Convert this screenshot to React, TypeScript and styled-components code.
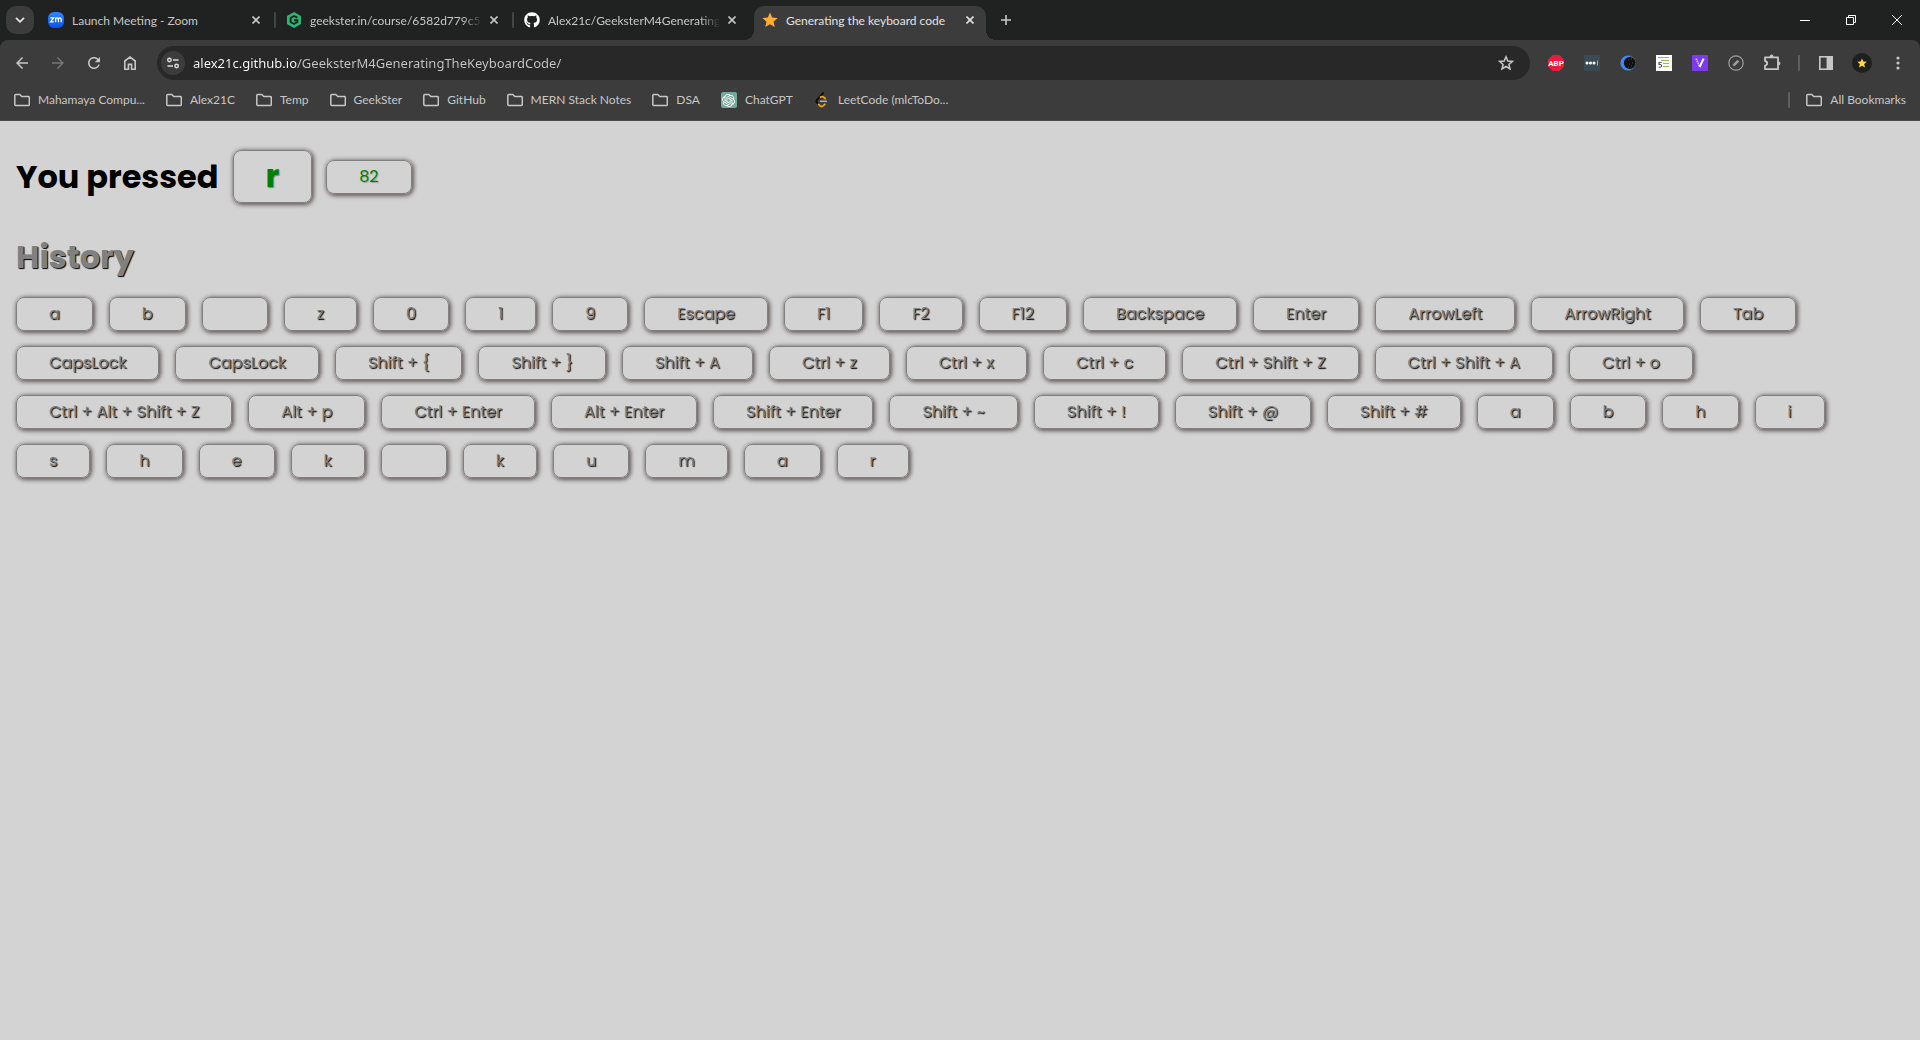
import React from 'react';
import styled, { createGlobalStyle, css } from 'styled-components';
import { FaGithub } from 'react-icons/fa';
import { SiOpenai } from 'react-icons/si';

const uiFont = "'Segoe UI', Lato, 'Open Sans', sans-serif";
const pageFont = "Poppins, Inter, 'Open Sans', sans-serif";

const color = {
  frame: '#202222',
  toolbar: '#3c3c3c',
  field: '#282828',
  icon: '#c7c7c7',
  text: '#c7c7c7',
  page: '#d3d3d3',
};

const GlobalStyle = createGlobalStyle`
  *, *::before, *::after { box-sizing: border-box; }
  body { margin: 0; background: ${color.page}; }
  button { font: inherit; color: inherit; border: 0; padding: 0; background: none; cursor: pointer; }
  ul { list-style: none; margin: 0; padding: 0; }
  svg { display: block; flex: none; }
`;

const Browser = styled.div`
  display: flex;
  flex-direction: column;
  min-height: 100vh;
`;

const Chrome = styled.header`
  background: ${color.frame};
  color: ${color.text};
  font-family: ${uiFont};
  font-size: 12px;
  line-height: 16px;
`;

const TabStrip = styled.div`
  display: flex;
  align-items: center;
  height: 40px;
  padding-left: 6px;
`;

const TabSearch = styled.button`
  display: grid;
  place-items: center;
  width: 28px;
  height: 28px;
  margin-right: 6px;
  border-radius: 10px;
  background: ${color.toolbar};
`;

const TabList = styled.div`
  display: flex;
  align-self: stretch;
  align-items: center;
  gap: 2px;
`;

const TabDivider = styled.span<{ $hidden?: boolean }>`
  width: 2px;
  height: 16px;
  border-radius: 1px;
  background: ${(p) => (p.$hidden ? 'transparent' : '#444545')};
`;

const TabBox = styled.div<{ $active?: boolean }>`
  display: flex;
  align-items: center;
  align-self: stretch;
  width: 232px;
  margin-top: 6px;
  padding: 0 8px 6px;
  border-radius: 10px 10px 0 0;
  ${(p) =>
    p.$active &&
    css`
      position: relative;
      background: ${color.toolbar};
      color: #e3e3e3;
      &::before,
      &::after {
        content: '';
        position: absolute;
        bottom: 0;
        width: 10px;
        height: 10px;
      }
      &::before {
        right: 100%;
        background: radial-gradient(circle at 0 0, transparent 10px, ${color.toolbar} 10px);
      }
      &::after {
        left: 100%;
        background: radial-gradient(circle at 100% 0, transparent 10px, ${color.toolbar} 10px);
      }
    `}
`;

const TabTitle = styled.span<{ $fade?: boolean }>`
  flex: 1;
  min-width: 0;
  margin: 0 4px 0 8px;
  padding-top: 2px;
  overflow: hidden;
  white-space: nowrap;
  ${(p) => p.$fade && css`mask-image: linear-gradient(to left, transparent, #000 20px);`}
`;

const CloseTab = styled.button`
  display: grid;
  place-items: center;
  width: 16px;
  height: 16px;
`;

const NewTab = styled.button`
  display: grid;
  place-items: center;
  width: 28px;
  height: 28px;
  margin-left: 2px;
`;

const WindowControls = styled.div`
  display: flex;
  align-self: stretch;
  margin-left: auto;
  color: #fff;
`;

const WindowButton = styled.button`
  display: grid;
  place-items: center;
  width: 46px;
`;

const Bars = styled.div`
  background: ${color.toolbar};
  border-radius: 8px 8px 0 0;
  border-bottom: 1px solid #4b4b4b;
`;

const Toolbar = styled.div`
  display: flex;
  align-items: center;
  padding: 6px 4px;
`;

const ToolButton = styled.button<{ $dim?: boolean }>`
  display: grid;
  place-items: center;
  width: 36px;
  height: 34px;
  color: ${(p) => (p.$dim ? '#757575' : color.icon)};
`;

const Omnibox = styled.form`
  display: flex;
  flex: 1;
  align-items: center;
  height: 34px;
  margin: 0 8px 0 9px;
  padding: 0 6px 0 4px;
  border-radius: 17px;
  background: ${color.field};
`;

const SiteInfo = styled.button`
  display: grid;
  place-items: center;
  width: 24px;
  height: 24px;
  border-radius: 50%;
  background: ${color.toolbar};
`;

const Address = styled.input`
  flex: 1;
  min-width: 0;
  height: 24px;
  margin-left: 8px;
  padding: 0;
  border: 0;
  outline: 0;
  font-family: 'Segoe UI', 'Noto Sans', sans-serif;
  font-size: 13px;
  color: transparent;
  background: linear-gradient(90deg, #fff 104px, ${color.text} 104px);
  background-clip: text;
`;

const Divider = styled.span`
  width: 2px;
  height: 16px;
  margin: 0 8px;
  border-radius: 1px;
  background: #5f5f5f;
`;

const Avatar = styled.span`
  display: grid;
  place-items: center;
  width: 20px;
  height: 20px;
  border-radius: 50%;
  background: #1f1f1f;
`;

const BookmarkBar = styled.nav`
  display: flex;
  align-items: center;
  gap: 21px;
  padding: 0 14px 6px;
`;

const Bookmark = styled.a`
  display: flex;
  align-items: center;
  gap: 8px;
  height: 28px;
  color: inherit;
  text-decoration: none;
  white-space: nowrap;
`;

const AllBookmarks = styled.div`
  display: flex;
  align-items: center;
  gap: 8px;
  margin-left: auto;
`;

const GptTile = styled.span`
  display: grid;
  place-items: center;
  width: 16px;
  height: 16px;
  border-radius: 2px;
  background: #74a99b;
  color: #fff;
`;

const Page = styled.main`
  flex: 1;
  padding: 29px 16px;
  background: ${color.page};
  font-family: ${pageFont};
  font-size: 16px;
`;

const Pressed = styled.h1`
  display: flex;
  align-items: center;
  gap: 14px;
  margin: 0;
  color: #000;
  font-size: 32px;
  font-weight: 700;
  line-height: 48px;
`;

const HistoryTitle = styled.h2`
  margin: 30px 0 16px;
  color: #808080;
  font-size: 32px;
  font-weight: 700;
  line-height: 48px;
  text-shadow: 1px 1px 1px #000;
`;

const keyCap = css`
  display: block;
  padding: 0 32px;
  border: 1px solid #808080;
  border-radius: 8px;
  box-shadow: 1px 1px 4px 1px #645858;
  font-family: ${pageFont};
  text-align: center;
  white-space: nowrap;
`;

const CurrentKey = styled.kbd`
  ${keyCap}
  padding-top: 2px;
  padding-bottom: 3px;
  color: green;
  line-height: 46px;
  text-shadow: 1px 1px 1px #808080;
`;

const CurrentCode = styled.kbd`
  ${keyCap}
  color: green;
  font-size: 16px;
  font-weight: 400;
  line-height: 32px;
  text-shadow: 1px 1px 1px #a0a0a0;
`;

const KeyList = styled.ul`
  display: flex;
  flex-wrap: wrap;
  gap: 15px 16px;
`;

const HistoryKey = styled.kbd`
  ${keyCap}
  height: 34px;
  color: #808080;
  font-size: 16px;
  line-height: 32px;
  text-shadow: 1px 1px 1px #000;
`;

const history = [
  'a', 'b', ' ', 'z', '0', '1', '9', 'Escape', 'F1', 'F2', 'F12', 'Backspace', 'Enter',
  'ArrowLeft', 'ArrowRight', 'Tab', 'CapsLock', 'CapsLock', 'Shift + {', 'Shift + }',
  'Shift + A', 'Ctrl + z', 'Ctrl + x', 'Ctrl + c', 'Ctrl + Shift + Z', 'Ctrl + Shift + A',
  'Ctrl + o', 'Ctrl + Alt + Shift + Z', 'Alt + p', 'Ctrl + Enter', 'Alt + Enter',
  'Shift + Enter', 'Shift + ~', 'Shift + !', 'Shift + @', 'Shift + #', 'a', 'b', 'h', 'i',
  's', 'h', 'e', 'k', ' ', 'k', 'u', 'm', 'a', 'r',
];

const starPoints = '8,0.6 10.2,5.6 15.6,6.1 11.5,9.7 12.8,15.1 8,12.2 3.2,15.1 4.5,9.7 0.4,6.1 5.8,5.6';

const Star = ({ size, fill }: { size: number; fill: string }) => (
  <svg width={size} height={size} viewBox="0 0 16 16">
    <polygon points={starPoints} fill={fill} />
  </svg>
);

const Cross = () => (
  <svg width="8" height="8" viewBox="0 0 8 8" stroke="currentColor" strokeWidth="1.6">
    <path d="M.5.5l7 7M7.5.5l-7 7" />
  </svg>
);

const Material = ({ d, size = 18 }: { d: string; size?: number }) => (
  <svg width={size} height={size} viewBox="0 0 24 24" fill="currentColor">
    <path d={d} />
  </svg>
);

const Folder = () => (
  <svg width="16" height="16" viewBox="0 0 16 16" fill="none" stroke="currentColor" strokeWidth="1.5" strokeLinejoin="round">
    <path d="M.8 3.5q0-1 1-1h4l2 2h6.5q1 0 1 1v7q0 1-1 1H1.8q-1 0-1-1z" />
  </svg>
);

const ZoomIcon = () => (
  <svg width="16" height="16" viewBox="0 0 16 16">
    <defs>
      <linearGradient id="zoomBlue" x1="0" y1="1" x2="0" y2="0">
        <stop offset="0" stopColor="#0a4ff0" />
        <stop offset="1" stopColor="#2f86ff" />
      </linearGradient>
    </defs>
    <rect width="16" height="16" rx="6" fill="url(#zoomBlue)" />
    <path d="M2.4 5.8h3.2L2.6 9.8h3.2M7.6 10.3V5.5M7.6 7.4q0-1.6 1.4-1.6t1.4 1.6v2.9M10.4 7.4q0-1.6 1.4-1.6t1.4 1.6v2.9" fill="none" stroke="#fff" strokeWidth="1.3" />
  </svg>
);

const GeeksterIcon = () => (
  <svg width="16" height="16" viewBox="0 0 16 16">
    <path d="M8 0l7 4v8l-7 4-7-4V4z" fill="#2bb673" />
    <path d="M11.4 5.6L8 4 4.6 6v4L8 12l3.4-2V8.2H8" fill="none" stroke="#202222" strokeWidth="1.9" />
  </svg>
);

const LeetCodeIcon = () => (
  <svg width="16" height="16" viewBox="0 0 16 16" fill="none" strokeWidth="1.8" strokeLinecap="round">
    <path d="M9.2 1L4 6.6" stroke="#0b0b0b" />
    <path d="M4 6.6L2.8 8q-1.1 1.3 0 2.5l1.4 1.4" stroke="#0b0b0b" />
    <path d="M4.6 12.4l1.2 1.3q1.8 1.6 3.6 0l1.4-1.4M6.6 5q2-1 3.4.4l1.2 1.2" stroke="#f5a11c" />
    <path d="M6.4 9.2h6" stroke="#b3b3b3" strokeWidth="1.5" />
  </svg>
);

const ChevronDown = () => (
  <svg width="10" height="6" viewBox="0 0 10 6" fill="none" stroke="#e3e3e3" strokeWidth="1.8">
    <path d="M1 .8l4 4 4-4" />
  </svg>
);

const HomeIcon = () => (
  <svg width="18" height="18" viewBox="0 0 18 18" fill="none" stroke="currentColor" strokeWidth="1.6">
    <path d="M3.8 15.2V7L9 3l5.2 4v8.2h-3.6v-4.8H7.4v4.8z" />
  </svg>
);

const TuneIcon = () => (
  <svg width="14" height="12" viewBox="0 0 14 12" fill="none" stroke="#dcdcdc" strokeWidth="1.5">
    <circle cx="3.4" cy="3" r="1.7" />
    <path d="M7 3h5.5M1.5 9H7" />
    <circle cx="10.6" cy="9" r="1.7" />
  </svg>
);

const AdblockIcon = () => (
  <svg width="16" height="16" viewBox="0 0 16 16">
    <path d="M4.7 0h6.6L16 4.7v6.6L11.3 16H4.7L0 11.3V4.7z" fill="#ee1c3c" />
    <text x="8" y="10.8" textAnchor="middle" fill="#fff" fontFamily="Roboto, sans-serif" fontSize="8" fontWeight="700">ABP</text>
  </svg>
);

const DotsIcon = () => (
  <svg width="16" height="16" viewBox="0 0 16 16">
    <rect width="16" height="16" fill="#3b4a54" />
    <g fill="#fff">
      <circle cx="3" cy="8" r="1.5" />
      <circle cx="6.5" cy="8" r="1.5" />
      <circle cx="10" cy="8" r="1.5" />
    </g>
    <path d="M13.5 5.5v5" stroke="#a5afb5" />
  </svg>
);

const MoonIcon = () => (
  <svg width="16" height="16" viewBox="0 0 16 16">
    <circle cx="8" cy="8" r="7.6" fill="#4288f5" />
    <circle cx="9.8" cy="8" r="6" fill="#111" />
    <path d="M10 .8a7.4 7.4 0 0 1 0 14.4" fill="none" stroke="#555" strokeWidth="1.2" strokeDasharray="1.4 1" />
    <path d="M8 5h1M11 4h1M12 8h1M9 9h1M11 11h1M8 12h1" stroke="#4a4a4a" />
  </svg>
);

const SheetIcon = () => (
  <svg width="16" height="16" viewBox="0 0 16 16">
    <rect width="16" height="16" fill="#fff" />
    <path d="M2 2.5h11M5 5.5h8M7 8.5h6M7 11.5h6" stroke="#8bc34a" strokeWidth="1.2" />
    <path d="M5.6 7.5H3v2q2.6-.4 2.6 1.3T2.6 12.2" fill="none" stroke="#555" strokeWidth="1.1" />
  </svg>
);

const VioletIcon = () => (
  <svg width="16" height="16" viewBox="0 0 16 16">
    <rect width="16" height="16" rx="1" fill="#7c3aed" />
    <path d="M4.2 3.6l3.4 8.2" stroke="#d8c6fb" strokeWidth="1.8" strokeDasharray="1.4 .8" />
    <path d="M7.6 12l4-8.4" stroke="#fff" strokeWidth="2" />
  </svg>
);

const PenCircleIcon = () => (
  <svg width="16" height="16" viewBox="0 0 16 16" fill="none" stroke="#9e9e9e">
    <circle cx="8" cy="8" r="7.2" strokeWidth="1.2" />
    <path d="M5.4 10.6l5-5" strokeWidth="2.6" />
  </svg>
);

const PuzzleIcon = () => (
  <svg width="18" height="18" viewBox="0 0 18 18" fill="none" stroke="currentColor" strokeWidth="1.8" strokeLinejoin="round">
    <path d="M2 3.4h13v11.8H2v-3.6q2.2-.4 2.2-2.3T2 7z" />
    <path d="M7 2.6a1.6 1.6 0 0 1 3.2 0zM15.4 7.8a1.6 1.6 0 0 1 0 3.2z" fill="currentColor" strokeWidth="1" />
  </svg>
);

const PanelIcon = () => (
  <svg width="16" height="16" viewBox="0 0 16 16">
    <rect x="1.8" y="1.8" width="12.4" height="12.4" fill="none" stroke="currentColor" strokeWidth="1.6" />
    <rect x="8.6" y="1.8" width="6" height="12.4" fill="currentColor" />
  </svg>
);

const MenuIcon = () => (
  <svg width="4" height="14" viewBox="0 0 4 14" fill="currentColor">
    <circle cx="2" cy="2" r="1.6" />
    <circle cx="2" cy="7" r="1.6" />
    <circle cx="2" cy="12" r="1.6" />
  </svg>
);

const tabs = [
  { title: 'Launch Meeting - Zoom', icon: <ZoomIcon /> },
  { title: 'geekster.in/course/6582d779c5', icon: <GeeksterIcon />, fade: true },
  { title: 'Alex21c/GeeksterM4Generating', icon: <FaGithub size={16} color="#fff" />, fade: true },
  { title: 'Generating the keyboard code', icon: <Star size={16} fill="#ffac33" />, active: true },
];

const bookmarks = [
  { name: 'Mahamaya Compu...' },
  { name: 'Alex21C' },
  { name: 'Temp' },
  { name: 'GeekSter' },
  { name: 'GitHub' },
  { name: 'MERN Stack Notes' },
  { name: 'DSA' },
  { name: 'ChatGPT', icon: <GptTile><SiOpenai size={13} /></GptTile> },
  { name: 'LeetCode (mlcToDo...', icon: <LeetCodeIcon /> },
];

const extensions = [
  { name: 'Adblock Plus', icon: <AdblockIcon /> },
  { name: 'Password tool', icon: <DotsIcon /> },
  { name: 'Dark mode', icon: <MoonIcon /> },
  { name: 'Sheet tool', icon: <SheetIcon /> },
  { name: 'Violet', icon: <VioletIcon /> },
  { name: 'Pen', icon: <PenCircleIcon /> },
  { name: 'Extensions', icon: <PuzzleIcon /> },
];

export default function App() {
  return (
    <Browser>
      <GlobalStyle />
      <Chrome>
        <TabStrip>
          <TabSearch aria-label="Search tabs"><ChevronDown /></TabSearch>
          <TabList role="tablist">
            {tabs.map((tab, i) => (
              <React.Fragment key={tab.title}>
                <TabBox role="tab" aria-selected={!!tab.active} $active={tab.active}>
                  {tab.icon}
                  <TabTitle $fade={tab.fade}>{tab.title}</TabTitle>
                  <CloseTab aria-label="Close tab"><Cross /></CloseTab>
                </TabBox>
                <TabDivider $hidden={i > 1} />
              </React.Fragment>
            ))}
          </TabList>
          <NewTab aria-label="New tab">
            <svg width="10" height="10" viewBox="0 0 10 10" stroke="currentColor" strokeWidth="1.6">
              <path d="M5 0v10M0 5h10" />
            </svg>
          </NewTab>
          <WindowControls>
            <WindowButton aria-label="Minimize">
              <svg width="10" height="10" viewBox="0 0 10 10" stroke="currentColor"><path d="M0 5.5h10" /></svg>
            </WindowButton>
            <WindowButton aria-label="Restore">
              <svg width="10" height="10" viewBox="0 0 10 10" stroke="currentColor" fill="none">
                <path d="M.5 2.5h7v7h-7zM2.5 2V.5h7v7H8" />
              </svg>
            </WindowButton>
            <WindowButton aria-label="Close">
              <svg width="10" height="10" viewBox="0 0 10 10" stroke="currentColor"><path d="M0 0l10 10M10 0L0 10" /></svg>
            </WindowButton>
          </WindowControls>
        </TabStrip>
        <Bars>
          <Toolbar>
            <ToolButton aria-label="Back"><Material d="M20 11H7.83l5.59-5.59L12 4l-8 8 8 8 1.41-1.41L7.83 13H20v-2z" /></ToolButton>
            <ToolButton aria-label="Forward" $dim><Material d="M4 13h12.17l-5.59 5.59L12 20l8-8-8-8-1.41 1.41L16.17 11H4v2z" /></ToolButton>
            <ToolButton aria-label="Reload"><Material d="M17.65 6.35C16.2 4.9 14.21 4 12 4c-4.42 0-7.99 3.58-7.99 8s3.57 8 7.99 8c3.73 0 6.84-2.55 7.73-6h-2.08c-.82 2.33-3.04 4-5.65 4-3.31 0-6-2.69-6-6s2.69-6 6-6c1.66 0 3.14.69 4.22 1.78L13 11h7V4l-2.35 2.35z" /></ToolButton>
            <ToolButton aria-label="Home"><HomeIcon /></ToolButton>
            <Omnibox>
              <SiteInfo type="button" aria-label="View site information"><TuneIcon /></SiteInfo>
              <Address aria-label="Address" defaultValue="alex21c.github.io/GeeksterM4GeneratingTheKeyboardCode/" />
              <ToolButton type="button" aria-label="Bookmark this page">
                <svg width="16" height="16" viewBox="0 0 16 16" fill="none" stroke="currentColor" strokeWidth="1.5">
                  <polygon points="8,1.8 9.8,6 14.4,6.4 10.9,9.4 12,14 8,11.5 4,14 5.1,9.4 1.6,6.4 6.2,6" />
                </svg>
              </ToolButton>
            </Omnibox>
            {extensions.map((ext) => (
              <ToolButton key={ext.name} aria-label={ext.name}>{ext.icon}</ToolButton>
            ))}
            <Divider />
            <ToolButton aria-label="Side panel"><PanelIcon /></ToolButton>
            <ToolButton aria-label="Profile"><Avatar><Star size={10} fill="#ffd83b" /></Avatar></ToolButton>
            <ToolButton aria-label="Menu"><MenuIcon /></ToolButton>
          </Toolbar>
          <BookmarkBar aria-label="Bookmarks">
            {bookmarks.map((b) => (
              <Bookmark key={b.name} href="#">{b.icon ?? <Folder />}{b.name}</Bookmark>
            ))}
            <AllBookmarks>
              <Divider />
              <Bookmark href="#"><Folder />All Bookmarks</Bookmark>
            </AllBookmarks>
          </BookmarkBar>
        </Bars>
      </Chrome>
      <Page>
        <Pressed>
          You pressed
          <CurrentKey>r</CurrentKey>
          <CurrentCode>82</CurrentCode>
        </Pressed>
        <HistoryTitle>History</HistoryTitle>
        <KeyList>
          {history.map((name, i) => (
            <li key={i}><HistoryKey>{name}</HistoryKey></li>
          ))}
        </KeyList>
      </Page>
    </Browser>
  );
}
